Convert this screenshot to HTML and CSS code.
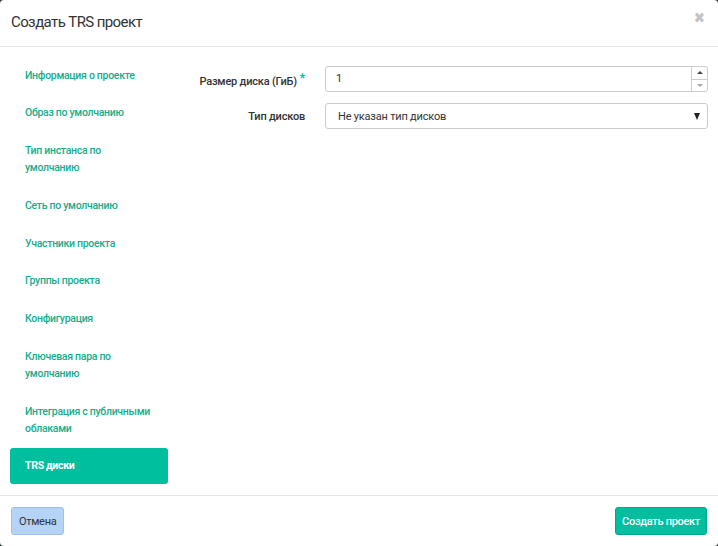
FILE: index.html
```html
<!DOCTYPE html>
<html lang="ru">
<head>
<meta charset="utf-8">
<title>Создать TRS проект</title>
<link rel="stylesheet" href="styles.css">
</head>
<body>
<div class="modal">
  <div class="modal-header">
    <h1 class="modal-title">Создать TRS проект</h1>
    <span class="close">&#x2716;</span>
  </div>
  <div class="modal-body">
    <ul class="nav">
      <li class="nav-item">Информация о проекте</li>
      <li class="nav-item">Образ по умолчанию</li>
      <li class="nav-item">Тип инстанса по<br>умолчанию</li>
      <li class="nav-item">Сеть по умолчанию</li>
      <li class="nav-item">Участники проекта</li>
      <li class="nav-item">Группы проекта</li>
      <li class="nav-item">Конфигурация</li>
      <li class="nav-item">Ключевая пара по<br>умолчанию</li>
      <li class="nav-item">Интеграция с публичными<br>облаками</li>
      <li class="nav-item active">TRS диски</li>
    </ul>
    <div class="form">
      <div class="form-row">
        <label class="form-label">Размер диска (ГиБ) <span class="req">*</span></label>
        <div class="number-input">
          <div class="number-value">1</div>
          <div class="spinner">
            <span class="spin up"></span>
            <span class="spin down"></span>
          </div>
        </div>
      </div>
      <div class="form-row">
        <label class="form-label">Тип дисков</label>
        <div class="select">
          <span>Не указан тип дисков</span>
          <span class="caret"></span>
        </div>
      </div>
    </div>
  </div>
  <div class="modal-footer">
    <button class="btn btn-cancel">Отмена</button>
    <button class="btn btn-primary">Создать проект</button>
  </div>
</div>
</body>
</html>
```
FILE: styles.css
```css
* { box-sizing: border-box; }
html, body { margin: 0; padding: 0; background: #2f3a36; }
body {
  font-family: Roboto, "DejaVu Sans Condensed", sans-serif;
  color: #333;
}
.modal {
  width: 718px;
  height: 546px;
  background: #fff;
  border-radius: 4px;
  display: flex;
  flex-direction: column;
  overflow: hidden;
}
.modal-header {
  flex: 0 0 47px;
  border-bottom: 1px solid #e5e5e5;
  display: flex;
  align-items: center;
  justify-content: space-between;
  padding: 0 11px 2px 11px;
}
.modal-title {
  margin: 0;
  font-size: 15px;
  font-weight: normal;
  letter-spacing: -0.6px;
  color: #333;
}
.close {
  color: #c4c4c4;
  font-size: 15px;
  line-height: 1;
  margin-top: -8px;
  margin-right: 2px;
}
.modal-body {
  flex: 1;
  display: flex;
  padding: 10px 10px 0 10px;
  min-height: 0;
}
.nav {
  list-style: none;
  margin: 0;
  padding: 0;
  width: 158px;
  display: flex;
  flex-direction: column;
  gap: 1.75px;
}
.nav-item {
  font-size: 10.5px;
  font-weight: 500;
  line-height: 17px;
  letter-spacing: -0.3px;
  padding: 9.5px 15px;
  color: #16ad8d;
  border-radius: 3px;
  white-space: nowrap;
}
.nav-item.active {
  background: #00bf9f;
  color: #fff;
  font-weight: bold;
}
.form {
  flex: 1;
  padding-top: 9px;
  display: flex;
  flex-direction: column;
  gap: 11px;
}
.form-row {
  display: flex;
  align-items: center;
}
.form-label {
  width: 137px;
  text-align: right;
  font-size: 11px;
  font-weight: 500;
  letter-spacing: -0.2px;
  color: #333;
  margin-right: 20px;
}
.req { color: #00bf9f; font-size: 13px; vertical-align: 3px; }
.number-input {
  flex: 1;
  height: 26px;
  display: flex;
  border: 1px solid #ccc;
  border-radius: 3px;
}
.number-value {
  flex: 1;
  font-size: 11px;
  padding-left: 10px;
  line-height: 24px;
}
.spinner {
  width: 16px;
  display: flex;
  flex-direction: column;
  border-left: 1px solid #ccc;
}
.spin {
  flex: 1;
  display: flex;
  align-items: center;
  justify-content: center;
}
.spin.up { border-bottom: 1px solid #ccc; }
.spin.up::before {
  content: "";
  border-left: 3px solid transparent;
  border-right: 3px solid transparent;
  border-bottom: 3px solid #444;
}
.spin.down::before {
  content: "";
  border-left: 3px solid transparent;
  border-right: 3px solid transparent;
  border-top: 3px solid #aaa;
}
.select {
  flex: 1;
  height: 26px;
  border: 1px solid #ccc;
  border-radius: 3px;
  display: flex;
  align-items: center;
  justify-content: space-between;
  padding: 0 6px 0 12px;
  font-size: 11px;
  letter-spacing: -0.2px;
}
.caret {
  width: 0;
  height: 0;
  margin-right: 1px;
  border-left: 3.5px solid transparent;
  border-right: 3.5px solid transparent;
  border-top: 7px solid #222;
}
.modal-footer {
  flex: 0 0 51px;
  border-top: 1px solid #e5e5e5;
  display: flex;
  justify-content: space-between;
  align-items: flex-start;
  padding: 11px 11px 0 11px;
}
.btn {
  height: 28px;
  border-radius: 3px;
  font-family: inherit;
  font-size: 11px;
  letter-spacing: -0.3px;
  padding: 0 7px;
  cursor: pointer;
}
.btn-cancel {
  background: #b5d2f7;
  border: 1px solid #9dc0ed;
  color: #333;
}
.btn-primary {
  background: #00bf9f;
  border: 1px solid #00a98c;
  color: #fff;
  font-weight: 500;
  padding: 0 6px;
}
```
